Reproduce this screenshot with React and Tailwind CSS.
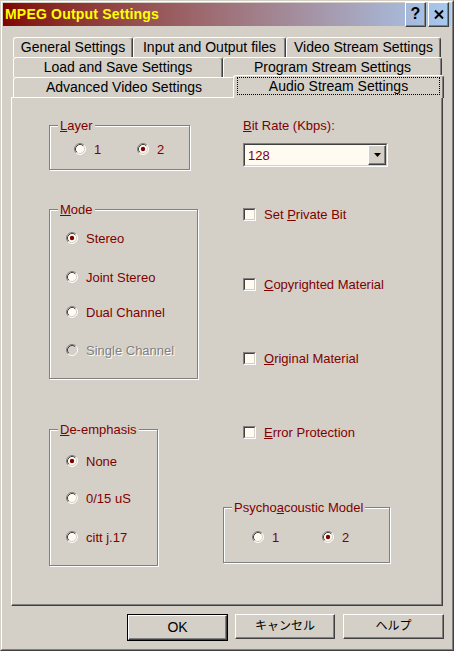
import React from 'react';

// classic 3D radio button
const Radio = ({ checked, disabled }) => (
    <svg width="12" height="12" viewBox="0 0 12 12" className="shrink-0">
        <circle cx="6" cy="6" r="5" fill={disabled ? '#d4d0c8' : '#fffbf0'} />
        <path d="M2.11 9.89A5.5 5.5 0 0 1 9.89 2.11" fill="none" stroke="#808080" />
        <path d="M9.89 2.11A5.5 5.5 0 0 1 2.11 9.89" fill="none" stroke="#ffffff" />
        <path d="M2.82 9.18A4.5 4.5 0 0 1 9.18 2.82" fill="none" stroke="#404040" />
        <path d="M9.18 2.82A4.5 4.5 0 0 1 2.82 9.18" fill="none" stroke="#d4d0c8" />
        {checked && <circle cx="6" cy="6" r="2.2" fill="#800000" />}
    </svg>
);

const RadioRow = ({ checked, disabled, children, className = '' }) => (
    <div className={`flex h-[16px] items-center gap-[8px] ${className}`}>
        <Radio checked={checked} disabled={disabled} />
        <span className={disabled ? 'text-[#808080] [text-shadow:1px_1px_0_#fff]' : 'text-[#800000]'}>{children}</span>
    </div>
);

const Check = () => (
    <div className="h-[13px] w-[13px] shrink-0 border border-t-[#808080] border-l-[#808080] border-b-white border-r-white">
        <div className="h-full w-full border border-t-[#404040] border-l-[#404040] border-b-[#d4d0c8] border-r-[#d4d0c8] bg-[#fffbf0]" />
    </div>
);

const CheckRow = ({ children, className = '' }) => (
    <div className={`ml-[20px] flex h-[15px] items-center gap-[8px] text-[#800000] ${className}`}>
        <Check />
        <span>{children}</span>
    </div>
);

const Group = ({ label, className, children }) => (
    <div className={`relative border border-[#808080] shadow-[1px_1px_0_#fff,inset_1px_1px_0_#fff] ${className}`}>
        <span className="absolute left-[8px] top-[-8px] bg-[#d4d0c8] px-[2px] leading-[15px] text-[#800000]">{label}</span>
        {children}
    </div>
);

const Tab = ({ className, children }) => (
    <div className={`flex h-[20px] items-center justify-center rounded-t-[3px] border-l border-r border-t border-l-white border-t-white border-r-[#404040] pb-[1px] text-[14px] text-black shadow-[inset_-1px_0_0_#808080] ${className}`}>
        {children}
    </div>
);

const DlgButton = ({ className, children }) => (
    <div className={`flex h-[25px] items-center justify-center border border-t-white border-l-white border-r-[#404040] border-b-[#404040] text-black shadow-[inset_-1px_-1px_0_#808080] ${className}`}>
        {children}
    </div>
);

export default function App() {
    return (
        <div className="h-[651px] w-[454px] border border-t-[#d4d0c8] border-l-[#d4d0c8] border-r-[#404040] border-b-[#404040] bg-[#d4d0c8] font-['Liberation_Sans','Noto_Sans_CJK_JP',sans-serif] text-[13px] leading-[15px]">
            <div className="flex h-full flex-col border border-t-white border-l-white border-r-[#808080] border-b-[#808080] p-[1px]">
                {/* title bar */}
                <div className="flex h-[23px] items-center bg-linear-to-r from-[#800000] to-[#a6caf0] pl-[2px] pr-[2px]">
                    <span className="flex-1 text-[14px] font-bold tracking-[0.2px] text-[#ffff00]">MPEG Output Settings</span>
                    <div className="flex gap-[2px]">
                        <DlgButton className="h-[18px] w-[21px] pb-[1px] text-[16px] font-bold leading-none">?</DlgButton>
                        <DlgButton className="h-[18px] w-[21px]">
                            <svg width="10" height="9" viewBox="0 0 10 9">
                                <path d="M1 0.5l8 8M9 0.5l-8 8" stroke="#000" strokeWidth="2" />
                            </svg>
                        </DlgButton>
                    </div>
                </div>

                {/* tabs */}
                <div className="ml-[10px] mt-[11px] flex flex-col">
                    <div className="flex">
                        <Tab className="w-[120px]">General Settings</Tab>
                        <Tab className="w-[153px]">Input and Output files</Tab>
                        <Tab className="w-[155px]">Video Stream Settings</Tab>
                    </div>
                    <div className="flex">
                        <Tab className="w-[210px]">Load and Save Settings</Tab>
                        <Tab className="w-[219px]">Program Stream Settings</Tab>
                    </div>
                    <div className="flex h-[20px]">
                        <Tab className="w-[222px]">Advanced Video Settings</Tab>
                        <div className="relative z-10 -ml-[2px] -mt-[2px] h-[23px] w-[211px] rounded-t-[3px] border-l border-r border-t border-l-white border-t-white border-r-[#404040] bg-[#d4d0c8] px-[3px] pt-[1px] shadow-[inset_-1px_0_0_#808080]">
                            <div className="flex h-[18px] items-center justify-center border border-dotted border-black text-[14px] text-black">
                                Audio Stream Settings
                            </div>
                        </div>
                    </div>
                </div>

                {/* panel */}
                <div className="ml-[8px] flex h-[509px] w-[432px] border border-t-white border-l-white border-r-[#404040] border-b-[#404040] shadow-[inset_-1px_-1px_0_#808080]">
                    <div className="ml-[37px] flex w-[174px] flex-col">
                        <Group label={<><u>L</u>ayer</>} className="mt-[27px] h-[45px] w-[141px]">
                            <div className="flex pl-[24px] pt-[15px]">
                                <RadioRow className="w-[63px]">1</RadioRow>
                                <RadioRow checked>2</RadioRow>
                            </div>
                        </Group>
                        <Group label={<><u>M</u>ode</>} className="mt-[39px] h-[170px] w-[149px]">
                            <div className="flex flex-col pl-[16px] pt-[20px]">
                                <RadioRow checked>Stereo</RadioRow>
                                <RadioRow className="mt-[23px]">Joint Stereo</RadioRow>
                                <RadioRow className="mt-[19px]">Dual Channel</RadioRow>
                                <RadioRow disabled className="mt-[22px]">Single Channel</RadioRow>
                            </div>
                        </Group>
                        <Group label={<><u>D</u>e-emphasis</>} className="mt-[50px] h-[137px] w-[109px]">
                            <div className="flex flex-col pl-[16px] pt-[23px]">
                                <RadioRow checked>None</RadioRow>
                                <RadioRow className="mt-[21px]">0/15 uS</RadioRow>
                                <RadioRow className="mt-[23px]">citt j.17</RadioRow>
                            </div>
                        </Group>
                    </div>

                    <div className="flex flex-col">
                        <div className="ml-[20px] mt-[20px] text-[#800000]"><u>B</u>it Rate (Kbps):</div>
                        <div className="ml-[20px] mt-[10px] h-[24px] w-[145px] border border-t-[#808080] border-l-[#808080] border-b-white border-r-white">
                            <div className="flex h-full items-stretch border border-t-[#404040] border-l-[#404040] border-b-[#d4d0c8] border-r-[#d4d0c8] bg-[#fffbf0]">
                                <span className="flex flex-1 items-center pl-[3px] text-[#800000]">128</span>
                                <DlgButton className="h-full w-[18px] bg-[#d4d0c8]">
                                    <svg width="7" height="4" viewBox="0 0 7 4">
                                        <path d="M0 0h7L3.5 4z" fill="#000" />
                                    </svg>
                                </DlgButton>
                            </div>
                        </div>
                        <CheckRow className="mt-[40px]">Set <u>P</u>rivate Bit</CheckRow>
                        <CheckRow className="mt-[55px]"><u>C</u>opyrighted Material</CheckRow>
                        <CheckRow className="mt-[59px]"><u>O</u>riginal Material</CheckRow>
                        <CheckRow className="mt-[59px]"><u>E</u>rror Protection</CheckRow>
                        <Group label={<>Psycho<u>a</u>coustic Model</>} className="mt-[67px] h-[56px] w-[167px]">
                            <div className="flex pl-[28px] pt-[21px]">
                                <RadioRow className="w-[70px]">1</RadioRow>
                                <RadioRow checked>2</RadioRow>
                            </div>
                        </Group>
                    </div>
                </div>

                {/* buttons */}
                <div className="ml-[124px] mt-[8px] flex">
                    <div className="w-[101px] border border-black">
                        <DlgButton className="h-[23px] text-[14px]">OK</DlgButton>
                    </div>
                    <DlgButton className="ml-[7px] w-[100px] text-[12px]">キャンセル</DlgButton>
                    <DlgButton className="ml-[8px] w-[101px] text-[12px]">ヘルプ</DlgButton>
                </div>
            </div>
        </div>
    );
}
